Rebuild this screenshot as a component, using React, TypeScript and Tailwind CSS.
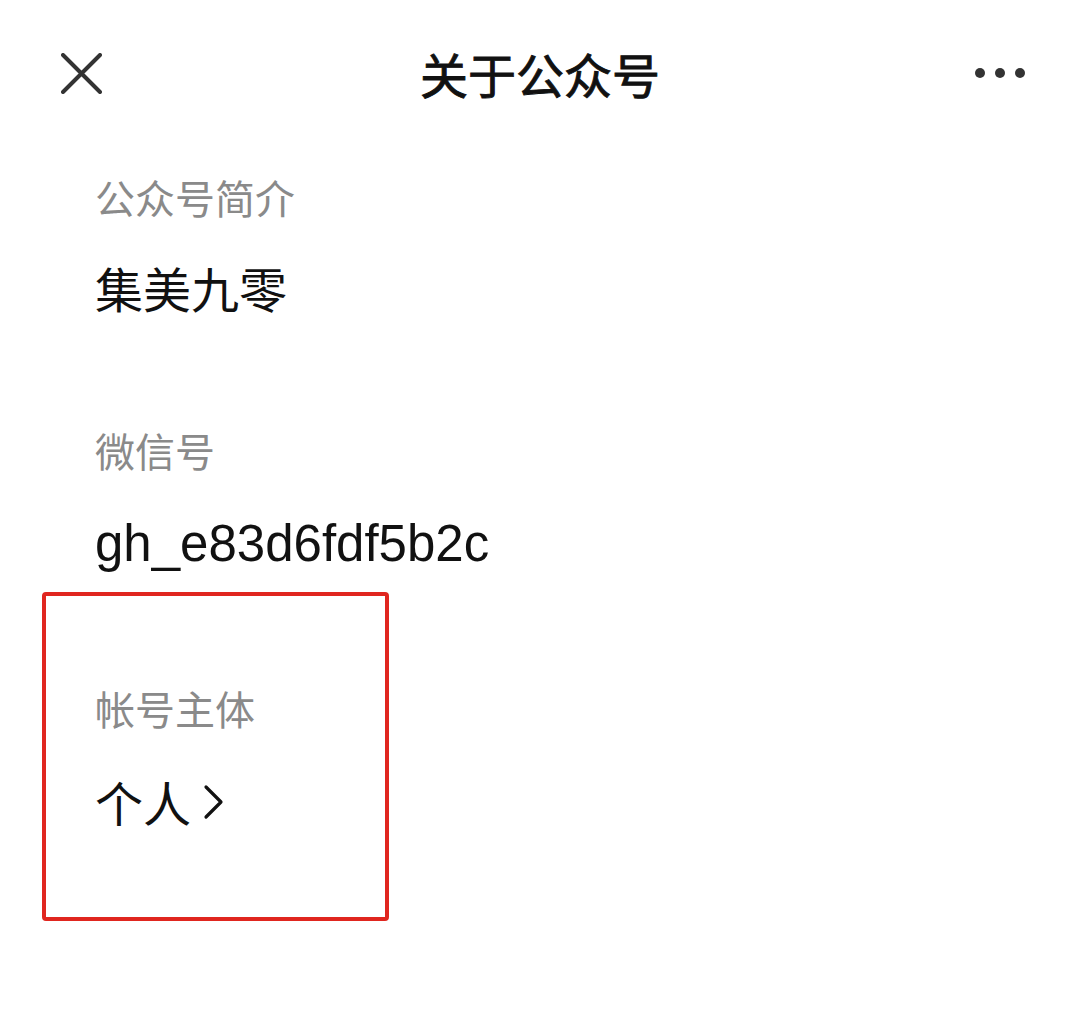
import React from "react";

const cjk = { fontFamily: '"Noto Sans CJK SC", "Noto Sans", sans-serif' };

export default function App() {
  return (
    <div className="w-[1080px] h-[1013px] bg-white overflow-hidden" style={cjk}>
      <header className="h-[146px] flex items-center">
        <div className="w-[150px] pl-[61px] flex items-center">
          <svg width="41" height="41" viewBox="0 0 41 41" fill="none">
            <path d="M2 2 L39 39 M39 2 L2 39" stroke="#333" strokeWidth="4" strokeLinecap="round" />
          </svg>
        </div>
        <h1 className="flex-1 text-center text-[48px] leading-[56px] font-normal text-[#111] [-webkit-text-stroke:0.9px_#111]">
          关于公众号
        </h1>
        <div className="w-[150px] pr-[55px] flex items-center justify-end gap-[10px]">
          <span className="block w-[10px] h-[10px] rounded-full bg-[#333]" />
          <span className="block w-[10px] h-[10px] rounded-full bg-[#333]" />
          <span className="block w-[10px] h-[10px] rounded-full bg-[#333]" />
        </div>
      </header>

      <section className="pl-[95px] pt-[31px]">
        <div className="text-[40px] leading-[40px] text-[#8a8a8a]">公众号简介</div>
        <div className="mt-[42px] text-[48px] leading-[56px] text-[#111]">集美九零</div>
      </section>

      <section className="pl-[95px] pt-[115px]">
        <div className="text-[40px] leading-[40px] text-[#8a8a8a]">微信号</div>
        <div
          className="mt-[46px] text-[51px] leading-[56px] text-[#111]"
          style={{ fontFamily: '"Liberation Sans", Arial, sans-serif' }}
        >
          gh_e83d6fdf5b2c
        </div>
      </section>

      <section className="ml-[42px] mt-[20px] w-[347px] h-[329px] border-[4px] border-[#e0261f] rounded-[4px] pl-[49px] pt-[92px]">
        <div className="text-[40px] leading-[40px] text-[#8a8a8a]">帐号主体</div>
        <div className="mt-[45px] text-[48px] leading-[56px] text-[#111] flex items-center">
          <span>个人</span>
          <svg className="ml-[12px] mt-[2px]" width="21" height="36" viewBox="0 0 21 36" fill="none">
            <path d="M3 3 L18 18 L3 33" stroke="#111" strokeWidth="3.2" strokeLinecap="round" strokeLinejoin="round" />
          </svg>
        </div>
      </section>
    </div>
  );
}
